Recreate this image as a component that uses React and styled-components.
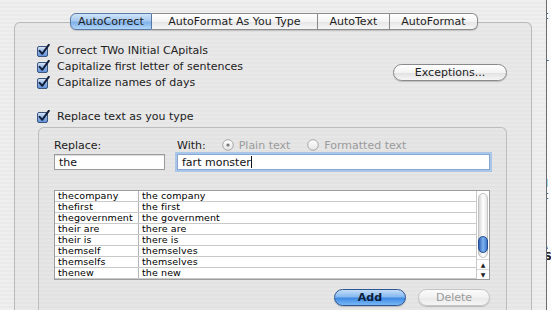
import React from 'react';
import styled, { createGlobalStyle } from 'styled-components';

const GlobalStyle = createGlobalStyle`
  html, body {
    margin: 0;
    padding: 0;
    overflow: hidden;
  }
  body {
    font-family: "DejaVu Sans", "Liberation Sans", sans-serif;
    color: #1f1f1f;
  }
`;

const Screen = styled.div`
  width: 551px;
  height: 310px;
  display: flex;
  overflow: hidden;
`;

const Window = styled.div`
  width: 546px;
  flex: none;
  padding: 13px 14px 0 14px;
  box-sizing: border-box;
  background: repeating-linear-gradient(0deg, #efefef 0 2px, #eaeaea 2px 4px);
  display: flex;
  flex-direction: column;
`;

const BehindWindow = styled.div`
  flex: 1;
  border-left: 1px solid #6b6b6b;
  background: #fbfbfb;
  display: flex;
  flex-direction: column;
  overflow: hidden;
  font-size: 11px;
  line-height: 1;
  color: #222;
`;

const Fragment = styled.span`
  margin-top: ${({ top }) => top}px;
  margin-left: -3px;
  font-weight: ${({ bold }) => (bold ? 700 : 400)};
`;

const TabBar = styled.div`
  display: flex;
  margin-left: 56px;
  position: relative;
  z-index: 1;
  margin-bottom: -8px;
`;

const Tab = styled.div`
  height: 15px;
  padding: 0 ${({ pad }) => pad}px;
  display: flex;
  align-items: center;
  font-size: 11px;
  color: #1d1d1d;
  border: 1px solid #8d8d8d;
  border-left: ${({ first }) => (first ? '1px solid #6f7f98' : 'none')};
  border-radius: ${({ first, last }) =>
    first ? '6px 0 0 6px' : last ? '0 6px 6px 0' : '0'};
  background: ${({ active }) =>
    active
      ? 'linear-gradient(#cfe3f8 0%, #a7caf0 45%, #7fb1ea 55%, #b3d6f8 100%)'
      : 'linear-gradient(#ffffff 0%, #f4f4f4 50%, #e6e6e6 55%, #f7f7f7 100%)'};
  border-color: ${({ active }) => (active ? '#5a7aa6' : '#8d8d8d')};
  box-shadow: 0 1px 1px rgba(0, 0, 0, 0.15);
`;

const GroupBox = styled.div`
  flex: 1;
  border: 1px solid #b9b9b9;
  border-bottom: none;
  border-radius: 6px 6px 0 0;
  background: repeating-linear-gradient(0deg, #e9e9e9 0 2px, #e5e5e5 2px 4px);
  padding: 19px 0 0 22px;
  display: flex;
  flex-direction: column;
  box-sizing: border-box;
`;

const TopSection = styled.div`
  display: flex;
  align-items: flex-start;
  justify-content: space-between;
  padding-right: 24px;
`;

const CheckList = styled.div`
  display: flex;
  flex-direction: column;
`;

const CheckRow = styled.label`
  display: flex;
  align-items: center;
  gap: 7px;
  height: 16px;
  font-size: 11px;
  color: #222;
  margin-top: ${({ top }) => top || 0}px;
`;

const PillButton = styled.button`
  height: 17px;
  width: ${({ w }) => w}px;
  border-radius: 9px;
  font-family: "DejaVu Sans", sans-serif;
  font-size: 11px;
  padding: 0;
  display: flex;
  align-items: center;
  justify-content: center;
  color: ${({ variant }) =>
    variant === 'primary' ? '#0d1f3c' : variant === 'disabled' ? '#9a9a9a' : '#222'};
  font-weight: ${({ variant }) => (variant === 'primary' ? 700 : 400)};
  border: 1px solid
    ${({ variant }) =>
      variant === 'primary' ? '#2f5590' : variant === 'disabled' ? '#c4c4c4' : '#8a8a8a'};
  background: ${({ variant }) =>
    variant === 'primary'
      ? 'linear-gradient(#c4def8 0%, #86b8ef 45%, #3f8ae3 55%, #79b8f6 100%)'
      : variant === 'disabled'
      ? 'linear-gradient(#fbfbfb 0%, #f1f1f1 50%, #e9e9e9 55%, #f5f5f5 100%)'
      : 'linear-gradient(#ffffff 0%, #f3f3f3 50%, #e2e2e2 55%, #f6f6f6 100%)'};
  box-shadow: 0 1px 1px rgba(0, 0, 0, 0.18);
  margin-top: ${({ top }) => top || 0}px;
`;

const InnerBox = styled.div`
  flex: 1;
  margin: 3px 24px 0 1px;
  border: 1px solid #bdbdbd;
  border-bottom: none;
  border-radius: 6px 6px 0 0;
  background: repeating-linear-gradient(0deg, #e6e6e6 0 2px, #e2e2e2 2px 4px);
  padding: 10px 16px 0 15px;
  display: flex;
  flex-direction: column;
`;

const FieldGrid = styled.div`
  display: grid;
  grid-template-columns: 111px 313px;
  column-gap: 12px;
  row-gap: 2px;
`;

const LabelRow = styled.div`
  display: flex;
  align-items: center;
  height: 14px;
  font-size: 11px;
  color: #222;
  gap: 5px;
`;

const RadioLabel = styled.span`
  color: #9b9b9b;
  margin-right: ${({ gap }) => gap || 0}px;
`;

const TextInput = styled.div`
  height: 16px;
  box-sizing: border-box;
  background: #fff;
  border: 1px solid ${({ focused }) => (focused ? '#86a9d3' : '#9b9b9b')};
  box-shadow: ${({ focused }) =>
    focused ? '0 0 0 2px #a9c6e8' : 'inset 0 1px 1px rgba(0,0,0,0.15)'};
  font-size: 11px;
  padding: 0 4px;
  display: flex;
  align-items: center;
  color: #111;
`;

const Caret = styled.span`
  display: inline-block;
  width: 1px;
  height: 12px;
  background: #111;
`;

const Table = styled.div`
  margin-top: 20px;
  height: 90px;
  width: 436px;
  box-sizing: border-box;
  border: 1px solid #9c9c9c;
  background: #fff;
  display: flex;
`;

const Rows = styled.div`
  flex: 1;
  display: flex;
  flex-direction: column;
`;

const Row = styled.div`
  display: grid;
  grid-template-columns: 84px 1fr;
  height: 11px;
  border-bottom: 1px solid #c9c9c9;
  box-sizing: border-box;
  font-size: 9.5px;
  line-height: 10px;
  color: #000;
`;

const Cell = styled.div`
  padding-left: 3px;
  white-space: nowrap;
  overflow: hidden;
  border-right: ${({ divider }) => (divider ? '1px solid #b4b4b4' : 'none')};
  letter-spacing: 0.1px;
`;

const ScrollBar = styled.div`
  width: 12px;
  border-left: 1px solid #c9c9c9;
  display: flex;
  flex-direction: column;
  background: #fff;
`;

const Track = styled.div`
  flex: 1;
  margin: 2px 1px 1px;
  border-radius: 6px;
  background: linear-gradient(90deg, #d6d6d6, #ffffff 50%, #e6e6e6);
  border: 1px solid #c4c4c4;
  display: flex;
  flex-direction: column;
  justify-content: flex-end;
  padding-bottom: 4px;
`;

const Thumb = styled.div`
  height: 15px;
  margin: 0 -1px;
  border-radius: 6px;
  background: linear-gradient(90deg, #2d64b8, #7fb3ef 50%, #3d78cf);
  border: 1px solid #224c8c;
`;

const Arrow = styled.div`
  height: 9px;
  display: flex;
  align-items: center;
  justify-content: center;
  font-size: 6px;
  color: #222;
  border-top: 1px solid #d8d8d8;
`;

const ButtonRow = styled.div`
  display: flex;
  justify-content: flex-end;
  gap: 12px;
  width: 436px;
  margin-top: 9px;
`;

const CheckBox = () => (
  <svg width="13" height="13" viewBox="0 0 13 13">
    <defs>
      <linearGradient id="cb" x1="0" y1="0" x2="0" y2="1">
        <stop offset="0" stopColor="#dfeafa" />
        <stop offset="0.5" stopColor="#90b4e6" />
        <stop offset="1" stopColor="#5f8fd6" />
      </linearGradient>
    </defs>
    <rect x="0.5" y="2.5" width="10" height="10" rx="1.5" fill="url(#cb)" stroke="#3d5680" />
    <path d="M2.6 6.8 L5.2 9.8 L11.8 0.8" fill="none" stroke="#13213d" strokeWidth="2" strokeLinecap="round" strokeLinejoin="round" />
  </svg>
);

const Radio = ({ on }) => (
  <svg width="12" height="12" viewBox="0 0 12 12">
    <defs>
      <linearGradient id="rd" x1="0" y1="0" x2="0" y2="1">
        <stop offset="0" stopColor="#ffffff" />
        <stop offset="1" stopColor="#e4e4e4" />
      </linearGradient>
    </defs>
    <circle cx="6" cy="6" r="5.3" fill="url(#rd)" stroke="#a9a9a9" />
    {on ? <circle cx="6" cy="6" r="1.6" fill="#7a7a7a" /> : null}
  </svg>
);

const tabs = [
  { label: 'AutoCorrect', pad: 7, active: true },
  { label: 'AutoFormat As You Type', pad: 16.5 },
  { label: 'AutoText', pad: 11.5 },
  { label: 'AutoFormat', pad: 11.5 },
];

const entries = [
  ['thecompany', 'the company'],
  ['thefirst', 'the first'],
  ['thegovernment', 'the government'],
  ['their are', 'there are'],
  ['their is', 'there is'],
  ['themself', 'themselves'],
  ['themselfs', 'themselves'],
  ['thenew', 'the new'],
];

const fragments = [
  { t: 't', top: 10 },
  { t: 'r', top: 36 },
  { t: 'I', top: 110, bold: true },
  { t: 't', top: 1 },
  { t: '\\', top: 38 },
  { t: 'S', top: 1, bold: true },
];

const App = () => (
  <Screen>
    <GlobalStyle />
    <Window>
      <TabBar>
        {tabs.map((tab, i) => (
          <Tab
            key={tab.label}
            pad={tab.pad}
            active={tab.active}
            first={i === 0}
            last={i === tabs.length - 1}
          >
            {tab.label}
          </Tab>
        ))}
      </TabBar>
      <GroupBox>
        <TopSection>
          <CheckList>
            <CheckRow><CheckBox />Correct TWo INitial CApitals</CheckRow>
            <CheckRow><CheckBox />Capitalize first letter of sentences</CheckRow>
            <CheckRow><CheckBox />Capitalize names of days</CheckRow>
          </CheckList>
          <PillButton w={114} top={22}>Exceptions...</PillButton>
        </TopSection>
        <CheckRow top={18}><CheckBox />Replace text as you type</CheckRow>
        <InnerBox>
          <FieldGrid>
            <LabelRow>Replace:</LabelRow>
            <LabelRow>
              With:
              <span style={{ width: 6 }} />
              <Radio on />
              <RadioLabel gap={12}>Plain text</RadioLabel>
              <Radio />
              <RadioLabel>Formatted text</RadioLabel>
            </LabelRow>
            <TextInput>the</TextInput>
            <TextInput focused>fart monster<Caret /></TextInput>
          </FieldGrid>
          <Table>
            <Rows>
              {entries.map(([from, to]) => (
                <Row key={from}>
                  <Cell divider>{from}</Cell>
                  <Cell>{to}</Cell>
                </Row>
              ))}
            </Rows>
            <ScrollBar>
              <Track>
                <Thumb />
              </Track>
              <Arrow>▲</Arrow>
              <Arrow>▼</Arrow>
            </ScrollBar>
          </Table>
          <ButtonRow>
            <PillButton w={72} variant="primary">Add</PillButton>
            <PillButton w={72} variant="disabled">Delete</PillButton>
          </ButtonRow>
        </InnerBox>
      </GroupBox>
    </Window>
    <BehindWindow>
      {fragments.map((f, i) => (
        <Fragment key={i} top={f.top} bold={f.bold}>{f.t}</Fragment>
      ))}
    </BehindWindow>
  </Screen>
);

export default App;
